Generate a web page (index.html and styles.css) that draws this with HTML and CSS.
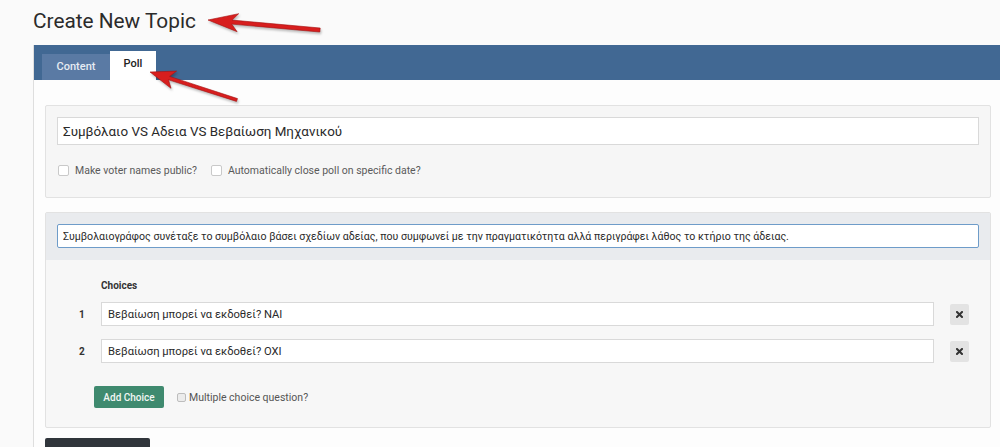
FILE: index.html
```html
<!DOCTYPE html>
<html lang="en">
<head>
<meta charset="utf-8">
<title>Create New Topic</title>
<link rel="stylesheet" href="styles.css">
</head>
<body>
<div class="page">
  <h1 class="title">Create New Topic</h1>
  <div class="container">
    <div class="tabbar">
      <div class="tab">Content</div>
      <div class="tab active">Poll</div>
    </div>
    <div class="content">
      <div class="panel poll-panel">
        <input class="field big" type="text" value="Συμβόλαιο VS Αδεια VS Βεβαίωση Μηχανικού">
        <div class="opts">
          <label class="opt"><input type="checkbox" class="cb"> Make voter names public?</label>
          <label class="opt"><input type="checkbox" class="cb"> Automatically close poll on specific date?</label>
        </div>
      </div>
      <div class="panel question-panel">
        <div class="q-head">
          <input class="field focus" type="text" value="Συμβολαιογράφος συνέταξε το συμβόλαιο βάσει σχεδίων αδείας, που συμφωνεί με την πραγματικότητα αλλά περιγράφει λάθος το κτήριο της άδειας.">
        </div>
        <div class="q-body">
          <div class="choices-label">Choices</div>
          <div class="choice">
            <span class="num">1</span>
            <input class="field small" type="text" value="Βεβαίωση μπορεί να εκδοθεί? ΝΑΙ">
            <span class="remove"><svg width="7" height="7" viewBox="0 0 7 7"><path d="M1 1L6 6M6 1L1 6" stroke="#333" stroke-width="2" stroke-linecap="square"/></svg></span>
          </div>
          <div class="choice">
            <span class="num">2</span>
            <input class="field small" type="text" value="Βεβαίωση μπορεί να εκδοθεί? ΟΧΙ">
            <span class="remove"><svg width="7" height="7" viewBox="0 0 7 7"><path d="M1 1L6 6M6 1L1 6" stroke="#333" stroke-width="2" stroke-linecap="square"/></svg></span>
          </div>
          <div class="actions">
            <button class="btn-add" type="button">Add Choice</button>
            <label class="multi"><input type="checkbox" class="cb-small"> Multiple choice question?</label>
          </div>
        </div>
      </div>
      <div class="submit-bar"><span class="submit"></span></div>
    </div>
  </div>
  <svg class="annot" width="1000" height="447" viewBox="0 0 1000 447">
    <g fill="#d71e1e" stroke="#a31010" stroke-width="0.6" stroke-linejoin="round">
      <polygon points="208,20 238.7,13.7 232.1,20.1 320.2,28 319.8,32 231.7,24.1 237.1,31.7"/>
      <polygon points="150,72 176.6,71.1 169.6,76.4 237.5,98.6 236.5,101.4 168.5,79.8 171,88.3"/>
    </g>
  </svg>
</div>
</body>
</html>
```

FILE: styles.css
```css
html, body {
  margin: 0;
  padding: 0;
}
body {
  background: #fafafa;
  font-family: Roboto, "Noto Sans", "DejaVu Sans", sans-serif;
  color: #333;
  width: 1000px;
  height: 447px;
  overflow: hidden;
}
.page {
  position: relative;
  padding-left: 33px;
  height: 447px;
}
.title {
  margin: 0;
  padding-top: 9px;
  height: 45px;
  box-sizing: border-box;
  font-size: 20.8px;
  line-height: 24px;
  font-weight: 400;
  color: #2b2b2b;
}
.container {
  border-left: 1px solid #dedede;
  background: #fdfdfd;
  height: 402px;
}
.tabbar {
  background: #416893;
  height: 35px;
  padding-left: 8px;
  display: flex;
  align-items: flex-end;
}
.tab {
  width: 68px;
  height: 26px;
  background: #5a7aa4;
  color: #e6ecf3;
  font-size: 11px;
  font-weight: 500;
  display: flex;
  align-items: center;
  justify-content: center;
  box-sizing: border-box;
  padding-bottom: 2px;
}
.tab.active {
  width: 46px;
  height: 29px;
  background: #fff;
  color: #222;
  padding-bottom: 4px;
}
.content {
  padding: 25px 9px 0 11px;
}
.panel {
  border: 1px solid #e2e2e2;
  border-radius: 2px;
}
.poll-panel {
  background: #f6f6f6;
  padding: 11px 11px 20px 11px;
}
.field {
  display: block;
  width: 100%;
  box-sizing: border-box;
  border: 1px solid #d9d9d9;
  background: #fff;
  font-family: Roboto, "Noto Sans", "DejaVu Sans", sans-serif;
  color: #2a2a2a;
  margin: 0;
  outline: none;
}
.field.big {
  height: 28px;
  font-size: 13.4px;
  padding: 0 5px;
}
.field.focus {
  height: 24px;
  font-size: 10.6px;
  padding: 0 5px;
  border-color: #6e9cc9;
  border-radius: 2px;
}
.field.small {
  height: 24px;
  font-size: 11.2px;
  padding: 0 6px;
}
.opts {
  display: flex;
  align-items: center;
  gap: 13px;
  margin-top: 18px;
  height: 14px;
}
.opt {
  display: flex;
  align-items: center;
  font-size: 10.5px;
  color: #5a5a5a;
}
.cb {
  appearance: none;
  -webkit-appearance: none;
  width: 11px;
  height: 11px;
  border: 1px solid #c9c9c9;
  border-radius: 2px;
  background: #fff;
  margin: 0 6px 0 1px;
}
.question-panel {
  margin-top: 14px;
  background: #f7f7f7;
}
.q-head {
  background: #e9ebee;
  padding: 11px 11px 12px 11px;
}
.q-body {
  padding: 19px 21px 19px 0;
}
.choices-label {
  padding-left: 55px;
  font-size: 10px;
  font-weight: 700;
  color: #333;
  line-height: 14px;
}
.choice {
  display: flex;
  align-items: center;
  padding-left: 33px;
  margin-top: 9px;
}
.choice + .choice {
  margin-top: 13px;
}
.num {
  width: 22px;
  font-size: 10px;
  font-weight: 700;
  color: #333;
}
.choice .field {
  flex: 1;
}
.remove {
  width: 19px;
  height: 21px;
  margin-left: 16px;
  background: #e3e3e3;
  border-radius: 2px;
  display: flex;
  align-items: center;
  justify-content: center;
}
.actions {
  display: flex;
  align-items: center;
  padding-left: 48px;
  margin-top: 23px;
}
.btn-add {
  width: 70px;
  height: 22px;
  border: none;
  border-radius: 2px;
  background: #3f8a6f;
  color: #f2f7f4;
  font-family: Roboto, "Noto Sans", sans-serif;
  font-size: 10px;
  font-weight: 500;
  padding: 0;
}
.multi {
  display: flex;
  align-items: center;
  margin-left: 13px;
  font-size: 10.5px;
  color: #555;
  font-family: Roboto, "Noto Sans", sans-serif;
}
.cb-small {
  appearance: none;
  -webkit-appearance: none;
  width: 9px;
  height: 9px;
  border: 1px solid #bdbdbd;
  border-radius: 2px;
  background: #ececec;
  margin: 0 3px 0 0;
}
.submit-bar {
  margin-top: 10px;
}
.submit {
  display: block;
  width: 105px;
  height: 12px;
  background: #30353b;
  border-radius: 2px 2px 0 0;
}
.annot {
  position: absolute;
  left: 0;
  top: 0;
  pointer-events: none;
  filter: drop-shadow(1px 2px 1px rgba(0,0,0,0.25));
}
```
